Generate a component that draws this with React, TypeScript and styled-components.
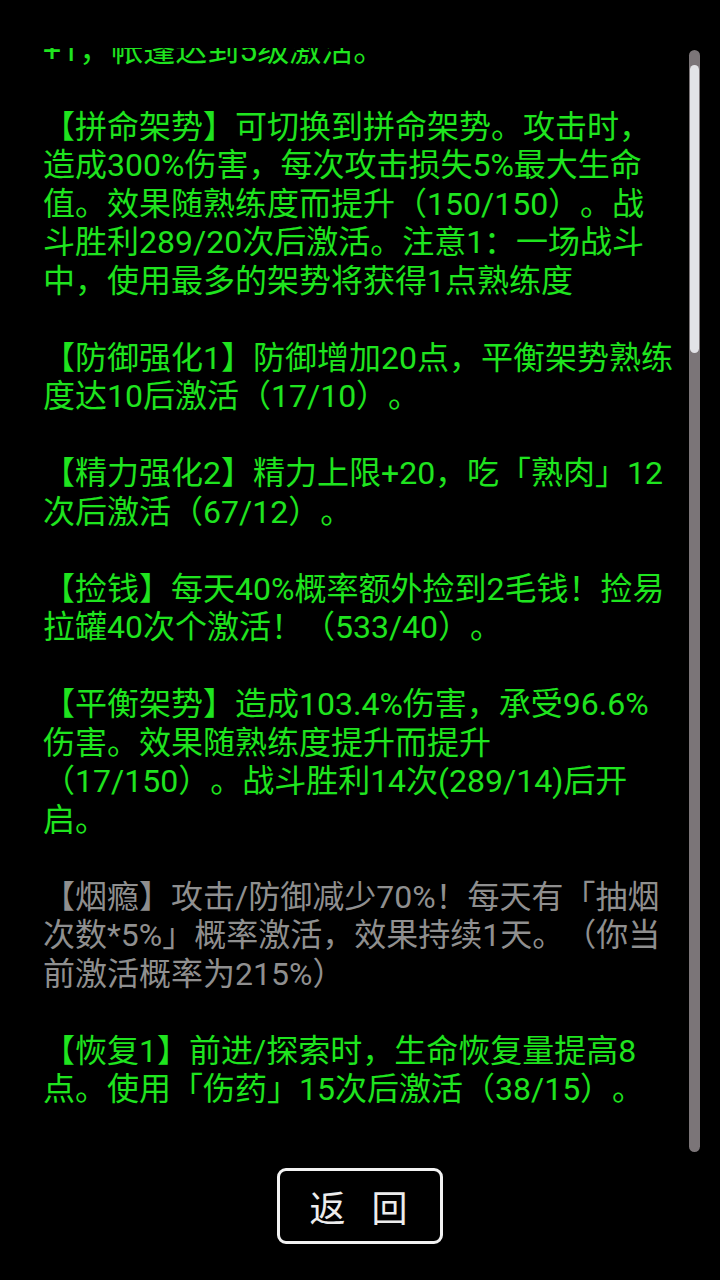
import React, { useLayoutEffect, useRef } from 'react';
import styled, { createGlobalStyle } from 'styled-components';

const GlobalStyle = createGlobalStyle`
  html, body {
    margin: 0;
    padding: 0;
    background: #000;
  }
  #root {
    height: 1280px;
  }
`

const Screen = styled.div`
  width: 720px;
  height: 1280px;
  background: #000;
  display: flex;
  flex-direction: column;
  align-items: center;
  font-family: Roboto, "Noto Sans CJK SC", sans-serif;
`

const Main = styled.div`
  width: 100%;
  display: flex;
  flex-direction: row;
  align-items: flex-start;
  padding: 48px 20px 0 43px;
  box-sizing: border-box;
  gap: 12px;
`

const Viewport = styled.div`
  width: 634px;
  height: 1102px;
  overflow-x: hidden;
  overflow-y: scroll;
  scrollbar-width: none;
  &::-webkit-scrollbar {
    display: none;
  }
`

const Content = styled.div`
  padding-bottom: 3000px;
`

const Entry = styled.p<{ $muted?: boolean }>`
  margin: 0 0 38.5px 0;
  font-size: 32px;
  line-height: 38.5px;
  color: ${ ({ $muted }) => $muted ? '#8f8f8f' : '#1fe41f' };
  text-spacing-trim: space-all;
`

const Line = styled.span`
  display: block;
  white-space: pre;
`

const Track = styled.div`
  margin-top: 2px;
  width: 11px;
  height: 1102px;
  border-radius: 6px;
  background: #7b7578;
  display: flex;
  flex-direction: column;
  align-items: center;
`

const Thumb = styled.div<{ $offset: number; $size: number }>`
  margin-top: ${ ({ $offset }) => $offset }px;
  width: 9px;
  height: ${ ({ $size }) => $size }px;
  border-radius: 5px;
  background: #e2e3e7;
`

const Footer = styled.div`
  flex: 1;
  display: flex;
  justify-content: center;
  padding-top: 16px;
`

const BackButton = styled.button`
  width: 166px;
  height: 76px;
  box-sizing: border-box;
  border: 3px solid #f2f2f2;
  border-radius: 9px;
  background: #000;
  color: #ececec;
  font-family: "Noto Sans CJK SC", sans-serif;
  font-size: 36px;
  letter-spacing: 9px;
  padding: 0 0 0 6px;
  display: flex;
  align-items: center;
  justify-content: center;
`

// each entry is kept as the lines the game wraps it into
const entries: { lines: string[]; muted?: boolean }[] = [
  { lines: ['【帐篷】每次休息时，生命与精力恢复量', '+1，帐篷达到5级激活。'] },
  { lines: [
    '【拼命架势】可切换到拼命架势。攻击时，',
    '造成300%伤害，每次攻击损失5%最大生命',
    '值。效果随熟练度而提升（150/150）。战',
    '斗胜利289/20次后激活。注意1：一场战斗',
    '中，使用最多的架势将获得1点熟练度',
  ] },
  { lines: ['【防御强化1】防御增加20点，平衡架势熟练', '度达10后激活（17/10）。'] },
  { lines: ['【精力强化2】精力上限+20，吃「熟肉」12', '次后激活（67/12）。'] },
  { lines: ['【捡钱】每天40%概率额外捡到2毛钱！捡易', '拉罐40次个激活！（533/40）。'] },
  { lines: [
    '【平衡架势】造成103.4%伤害，承受96.6%',
    '伤害。效果随熟练度提升而提升',
    '（17/150）。战斗胜利14次(289/14)后开',
    '启。',
  ] },
  { lines: [
    '【烟瘾】攻击/防御减少70%！每天有「抽烟',
    '次数*5%」概率激活，效果持续1天。（你当',
    '前激活概率为215%）',
  ], muted: true },
  { lines: ['【恢复1】前进/探索时，生命恢复量提高8', '点。使用「伤药」15次后激活（38/15）。'] },
]

export default function App () {
  const viewRef = useRef<HTMLDivElement>(null);
  const firstRef = useRef<HTMLParagraphElement>(null);

  useLayoutEffect(() => {
    const view = viewRef.current;
    const first = firstRef.current;
    if (view && first) {
      // last line of the first entry sits half cut at the top edge
      view.scrollTop = first.offsetHeight - 38.5 + 17;
    }
  }, []);

  return (
    <Screen>
      <GlobalStyle />
      <Main>
        <Viewport ref={ viewRef }>
          <Content>
            { entries.map((e, i) => (
              <Entry key={ i } $muted={ e.muted } ref={ i === 0 ? firstRef : undefined }>
                { e.lines.map((l, j) => <Line key={ j }>{ l }</Line>) }
              </Entry>
            )) }
          </Content>
        </Viewport>
        <Track>
          <Thumb $offset={ 15 } $size={ 288 } />
        </Track>
      </Main>
      <Footer>
        <BackButton>返 回</BackButton>
      </Footer>
    </Screen>
  )
}
